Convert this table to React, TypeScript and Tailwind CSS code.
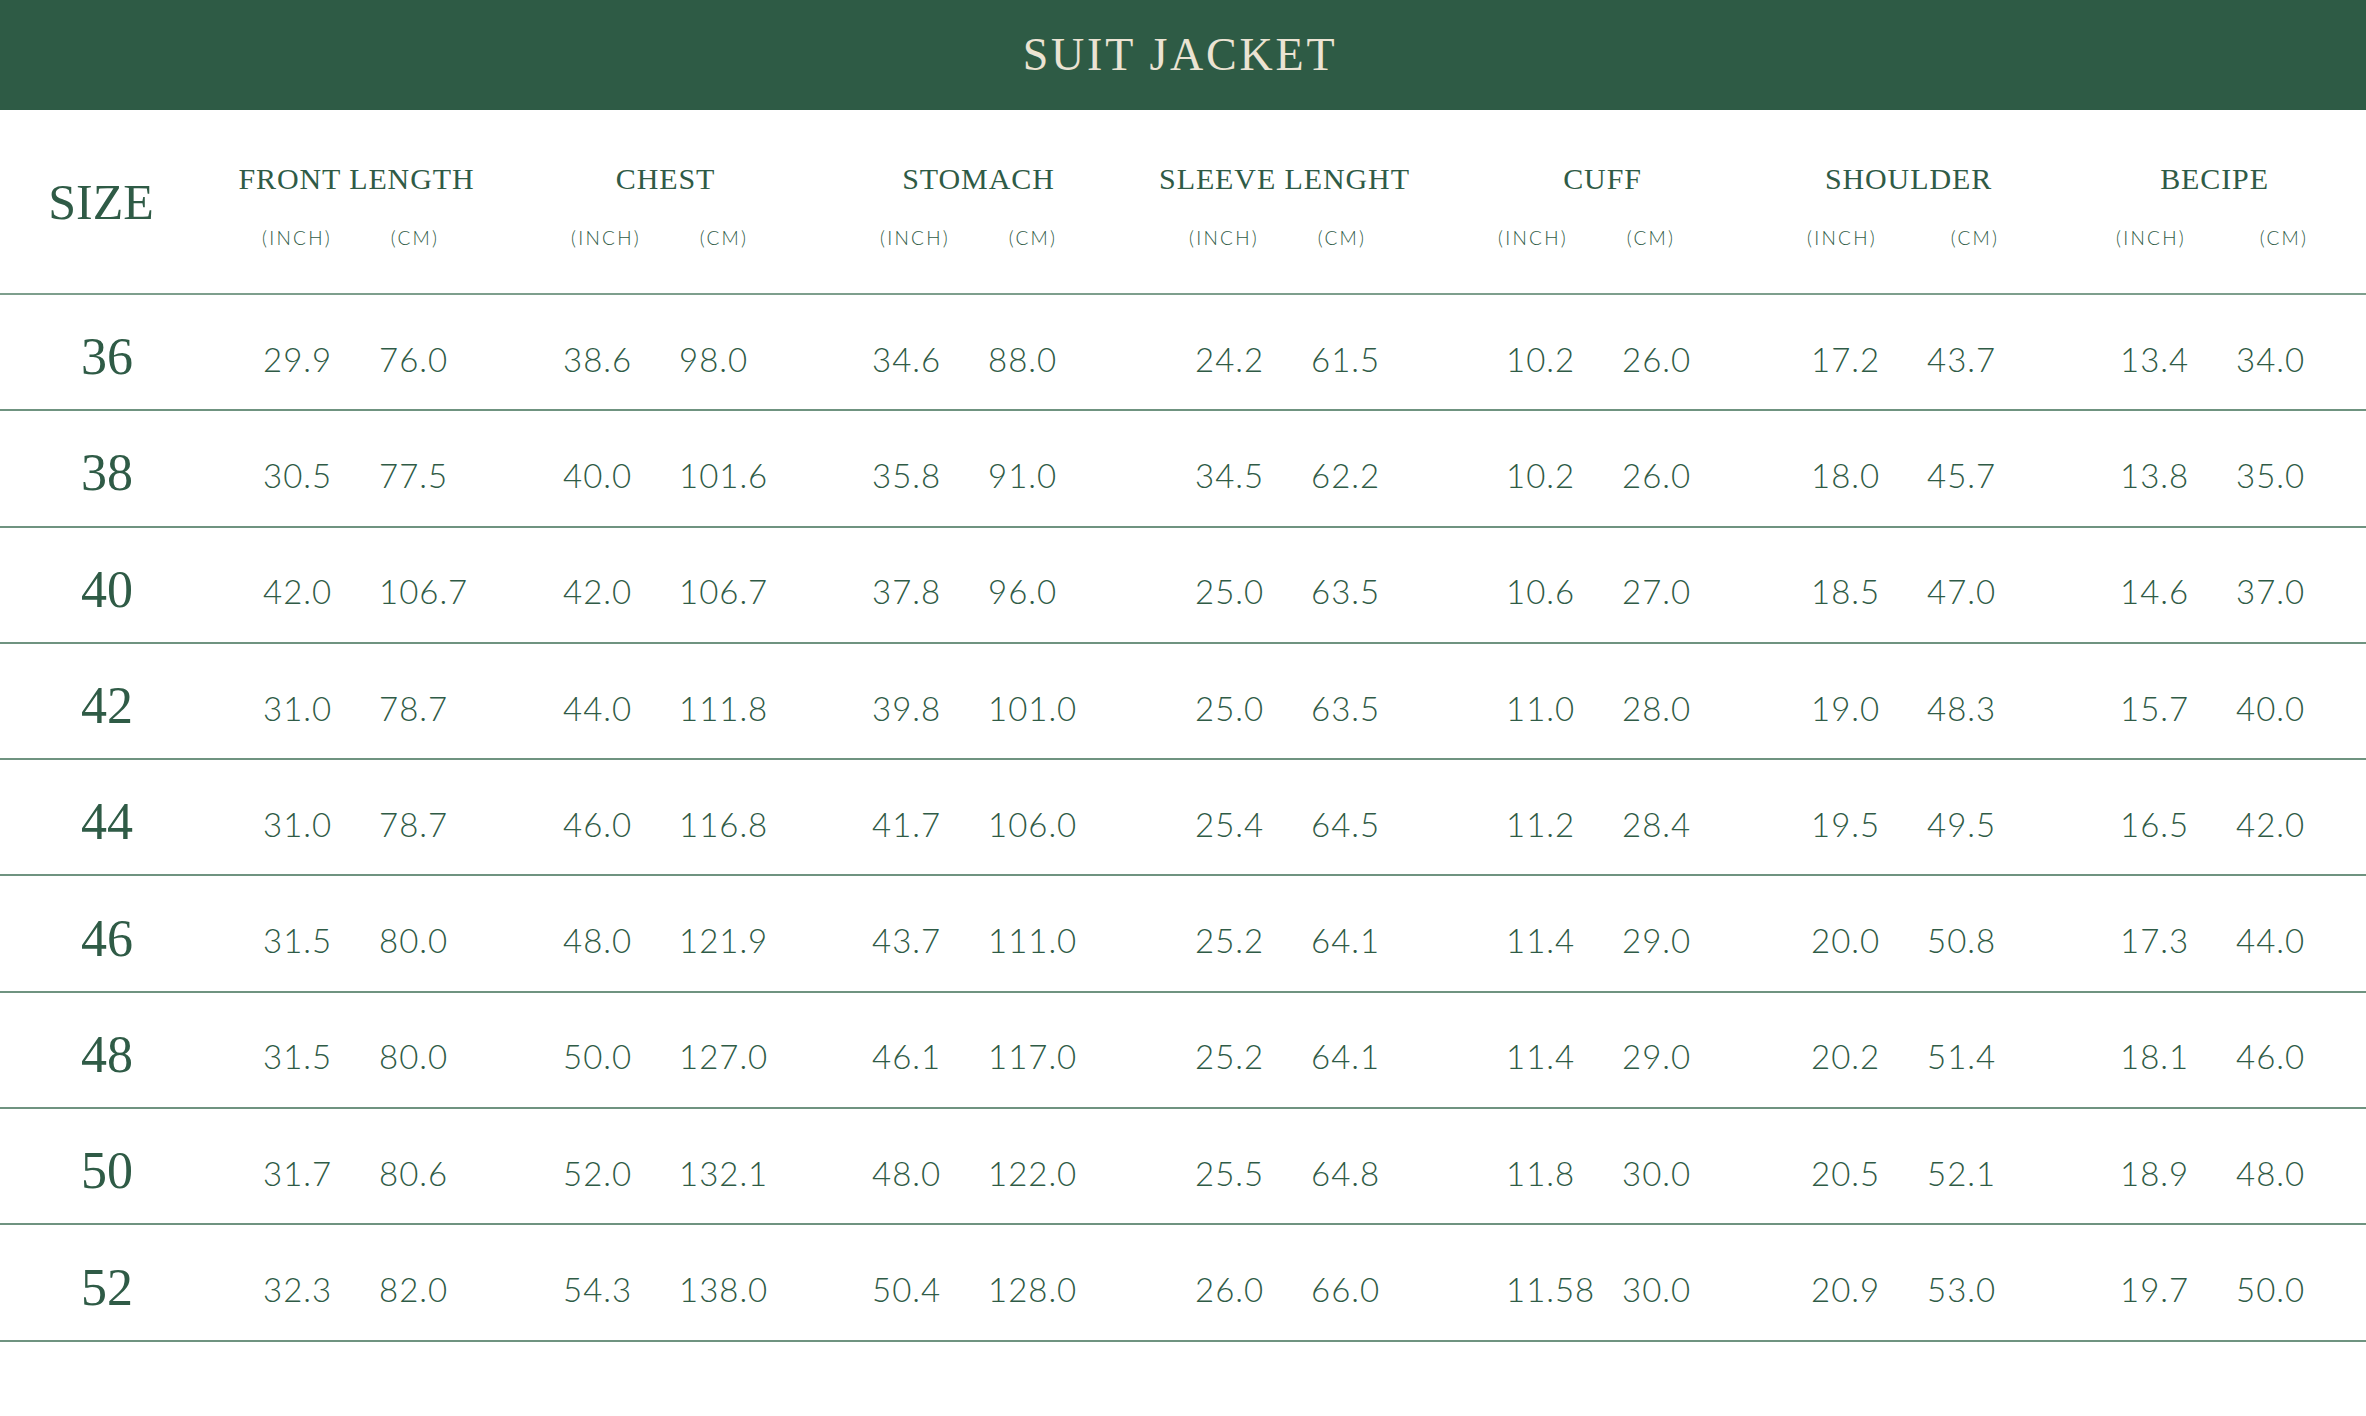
interface Group {
  title: string;
  titleShift: string;
  valPad: string;
  cmSub: string;
}

const GROUPS: Group[] = [
  { title: "FRONT LENGTH", titleShift: "", valPad: "pl-[61px]", cmSub: "" },
  { title: "CHEST", titleShift: "", valPad: "pl-[52px]", cmSub: "" },
  { title: "STOMACH", titleShift: "pl-[8px]", valPad: "pl-[52px]", cmSub: "" },
  { title: "SLEEVE LENGHT", titleShift: "pl-[2px]", valPad: "pl-[66px]", cmSub: "" },
  { title: "CUFF", titleShift: "pl-[20px]", valPad: "pl-[68px]", cmSub: "" },
  { title: "SHOULDER", titleShift: "pl-[14px]", valPad: "pl-[64px]", cmSub: "ml-[15px]" },
  { title: "BECIPE", titleShift: "pl-[8px]", valPad: "pl-[64px]", cmSub: "ml-[15px]" },
];

const ROWS: [string, string[]][] = [
  ["36", ["29.9", "76.0", "38.6", "98.0", "34.6", "88.0", "24.2", "61.5", "10.2", "26.0", "17.2", "43.7", "13.4", "34.0"]],
  ["38", ["30.5", "77.5", "40.0", "101.6", "35.8", "91.0", "34.5", "62.2", "10.2", "26.0", "18.0", "45.7", "13.8", "35.0"]],
  ["40", ["42.0", "106.7", "42.0", "106.7", "37.8", "96.0", "25.0", "63.5", "10.6", "27.0", "18.5", "47.0", "14.6", "37.0"]],
  ["42", ["31.0", "78.7", "44.0", "111.8", "39.8", "101.0", "25.0", "63.5", "11.0", "28.0", "19.0", "48.3", "15.7", "40.0"]],
  ["44", ["31.0", "78.7", "46.0", "116.8", "41.7", "106.0", "25.4", "64.5", "11.2", "28.4", "19.5", "49.5", "16.5", "42.0"]],
  ["46", ["31.5", "80.0", "48.0", "121.9", "43.7", "111.0", "25.2", "64.1", "11.4", "29.0", "20.0", "50.8", "17.3", "44.0"]],
  ["48", ["31.5", "80.0", "50.0", "127.0", "46.1", "117.0", "25.2", "64.1", "11.4", "29.0", "20.2", "51.4", "18.1", "46.0"]],
  ["50", ["31.7", "80.6", "52.0", "132.1", "48.0", "122.0", "25.5", "64.8", "11.8", "30.0", "20.5", "52.1", "18.9", "48.0"]],
  ["52", ["32.3", "82.0", "54.3", "138.0", "50.4", "128.0", "26.0", "66.0", "11.58", "30.0", "20.9", "53.0", "19.7", "50.0"]],
];

const serif = "font-['Liberation_Serif',serif]";
const sans = "font-['Lato',sans-serif]";

export default function App() {
  return (
    <div className="w-[2366px] h-[1416px] bg-white text-[#2f5b46]">
      <header className="h-[110px] bg-[#2e5b45] flex items-center justify-center">
        <h1 className={`${serif} text-[46px] leading-none tracking-[0.06em] text-[#ebe3d3] pr-[6px]`}>
          SUIT JACKET
        </h1>
      </header>

      <div className="flex h-[185px] border-b-2 border-[#7e9f8d]">
        <div className="w-[202px] flex items-center justify-center">
          <span className={`${serif} text-[50px] leading-none`}>SIZE</span>
        </div>
        {GROUPS.map((g) => (
          <div key={g.title} className="w-[309px] flex flex-col pt-[54px]">
            <p className={`${serif} text-[30px] leading-none tracking-[0.03em] text-center ${g.titleShift}`}>
              {g.title}
            </p>
            <div className={`${sans} font-light text-[19px] leading-none tracking-[0.12em] flex pl-[36px] mt-[34px]`}>
              <span className="w-[118px] text-center">(INCH)</span>
              <span className={`w-[118px] text-center ${g.cmSub}`}>(CM)</span>
            </div>
          </div>
        ))}
      </div>

      {ROWS.map(([size, vals]) => (
        <div key={size} className="flex items-center h-[116.3px] pt-[14px] border-b-2 border-[#6f9380]">
          <div className="w-[202px] pl-[12px] pb-[4px] text-center">
            <span className={`${serif} text-[52px] leading-none`}>{size}</span>
          </div>
          {GROUPS.map((g, i) => (
            <div key={g.title} className={`w-[309px] flex ${g.valPad} ${sans} font-light text-[33px] leading-none tracking-[0.03em]`}>
              <span className="w-[116px]">{vals[i * 2]}</span>
              <span>{vals[i * 2 + 1]}</span>
            </div>
          ))}
        </div>
      ))}
    </div>
  );
}
